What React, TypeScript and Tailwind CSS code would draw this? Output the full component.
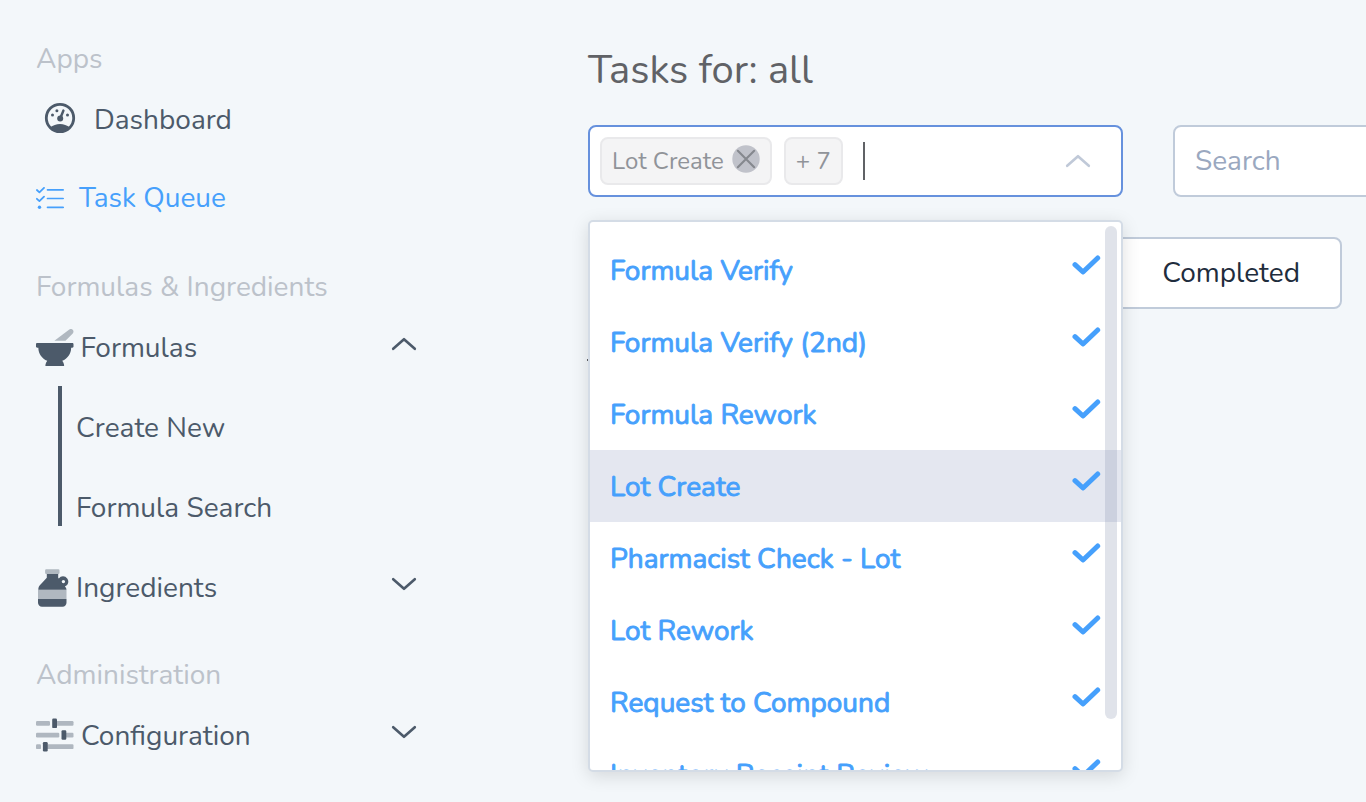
import React from "react";

const FONT = "font-['Nunito','Lato',sans-serif]";

function Chevron({ up, className }: { up?: boolean; className?: string }) {
  return (
    <svg viewBox="0 0 26 14" className={"h-[14px] w-[26px] shrink-0 " + (className ?? "")} fill="none" stroke="currentColor" strokeWidth="2.6" strokeLinecap="round" strokeLinejoin="round">
      <path d={up ? "M2.2 11.8 13 2.2 23.8 11.8" : "M2.2 2.2 13 11.8 23.8 2.2"} />
    </svg>
  );
}

function GaugeIcon() {
  return (
    <svg viewBox="0 0 32 32" className="mb-[2px] h-8 w-8 shrink-0">
      <circle cx="16" cy="16" r="13.7" fill="none" stroke="currentColor" strokeWidth="2.8" />
      <path d="M6.2 25.2C9 23.5 12.3 22.1 16 22.1s7 1.4 9.8 3.1A14 14 0 0 1 6.2 25.2Z" fill="currentColor" />
      <path d="M16.6 15.5 19.4 8.6" stroke="currentColor" strokeWidth="2.5" strokeLinecap="round" />
      <circle cx="16.2" cy="16.4" r="3" fill="currentColor" />
      <circle cx="8.5" cy="13" r="1.5" fill="currentColor" />
      <circle cx="12.9" cy="8.8" r="1.5" fill="currentColor" />
      <circle cx="23.5" cy="13" r="1.5" fill="currentColor" />
    </svg>
  );
}

function TasksIcon() {
  return (
    <svg viewBox="0 0 28 22" className="h-[22px] w-7 shrink-0" fill="none" stroke="currentColor" strokeWidth="1.8" strokeLinecap="round" strokeLinejoin="round">
      <path d="M11.5 2.8H27.2M11.5 11.5H27.2M11.5 20.3H27.2" strokeWidth="1.7" />
      <path d="M.9 3 3.4 5.3 8 .9M.9 11.8 3.4 14.1 8 9.7" />
      <circle cx="3.5" cy="20.3" r="1.7" fill="currentColor" stroke="none" />
    </svg>
  );
}

function MortarIcon() {
  return (
    <svg viewBox="0 0 512 512" className="mt-[2px] size-[37.5px] shrink-0" fill="currentColor">
      <path opacity=".4" d="M501.54 60.91c17.22-17.22 12.51-46.25-9.27-57.14a35.696 35.696 0 0 0-37.37 3.37L251.09 160h151.37l99.08-99.09z" />
      <path d="M496 192H16c-8.84 0-16 7.16-16 16v32c0 8.84 7.16 16 16 16h16c0 80.98 50.2 150.11 121.13 178.32-12.76 16.87-21.72 36.8-24.95 58.69-1.46 9.92 6.04 18.98 16.07 18.98h223.5c10.03 0 17.53-9.06 16.07-18.98-3.22-21.89-12.18-41.82-24.95-58.69C429.8 406.11 480 336.98 480 256h16c8.84 0 16-7.16 16-16v-32c0-8.84-7.16-16-16-16z" />
    </svg>
  );
}

function JugIcon() {
  return (
    <svg viewBox="0 0 34 38" className="h-[38px] w-[34px] shrink-0" fill="currentColor">
      <path opacity=".4" d="M10.3.2H22.3Q23.5.2 23.5 1.4V3.8Q23.5 5 22.3 5H10.3Q9.1 5 9.1 3.8V1.4Q9.1.2 10.3.2ZM2 20.7H30.5V30H2Z" />
      <path fillRule="evenodd" d="M10.8 5H22.2V8.8L22.8 9.4A5.3 5.3 0 1 1 28.9 17.6Q30.5 19.2 30.5 20.7H2.3C2.3 18 3.2 17 5 15L10.8 8.8ZM27.4 10.9A1.7 1.7 0 1 0 27.4 14.3 1.7 1.7 0 1 0 27.4 10.9Z" />
      <path d="M2 30H30.5V33.5A4 4 0 0 1 26.5 37.7H6A4 4 0 0 1 2 33.5Z" />
    </svg>
  );
}

function SlidersIcon() {
  return (
    <svg viewBox="0 0 38 34" className="h-[34px] w-[38px] shrink-0" fill="currentColor">
      <g opacity=".4">
        <rect x="0" y="3" width="14" height="4.8" rx="1.2" />
        <rect x="19" y="3" width="18.5" height="4.8" rx="1.2" />
        <rect x="0" y="14.7" width="23.3" height="4.8" rx="1.2" />
        <rect x="29" y="14.7" width="8.5" height="4.8" rx="1.2" />
        <rect x="0" y="26.3" width="5" height="4.8" rx="1.2" />
        <rect x="10" y="26.3" width="27.5" height="4.8" rx="1.2" />
      </g>
      <rect x="16.2" y=".6" width="4.8" height="9.5" rx="1.2" />
      <rect x="25.5" y="12.3" width="4.8" height="9.5" rx="1.2" />
      <rect x="6.9" y="24" width="4.8" height="9.5" rx="1.2" />
    </svg>
  );
}

function SectionLabel({ children, className }: { children: React.ReactNode; className: string }) {
  return <div className={"flex h-10 items-center text-[#bcc2ca] " + className}>{children}</div>;
}

function Sidebar() {
  return (
    <nav className="flex w-[588px] shrink-0 flex-col pt-[39px] pl-9 text-[28px] leading-10 text-[#4c5a6a]">
      <SectionLabel className="">Apps</SectionLabel>
      <a className="flex h-20 items-center gap-[16px] pl-2"><GaugeIcon /><span className="pt-[2px] pl-[2px]">Dashboard</span></a>
      <a className="flex h-[78px] items-center gap-[15px] text-[#46a0fc]"><TasksIcon /><span>Task Queue</span></a>
      <SectionLabel className="mt-[30px]">Formulas &amp; Ingredients</SectionLabel>
      <div className="flex h-[79px] w-[381px] items-center">
        <MortarIcon />
        <span className="flex-1 pt-[2px] pl-[7px]">Formulas</span>
        <Chevron up className="mb-[5px]" />
      </div>
      <div className="ml-[22px] h-[140px] border-l-4 border-[#4c5a6a] pl-[14px]">
        <div className="flex h-[84px] items-center">Create New</div>
        <div className="flex h-[76px] items-center">Formula Search</div>
      </div>
      <div className="mt-[22px] flex h-20 w-[381px] items-center">
        <JugIcon />
        <span className="flex-1 pl-[6px]">Ingredients</span>
        <Chevron className="mb-[8px]" />
      </div>
      <SectionLabel className="mt-[27px]">Administration</SectionLabel>
      <div className="flex h-20 w-[381px] items-center">
        <SlidersIcon />
        <span className="flex-1 pt-[2px] pl-[7px]">Configuration</span>
        <Chevron className="mb-[7px]" />
      </div>
    </nav>
  );
}

const OPTIONS = ["Formula Verify", "Formula Verify (2nd)", "Formula Rework", "Lot Create", "Pharmacist Check - Lot", "Lot Rework", "Request to Compound", "Inventory Receipt Review"];

function Dropdown() {
  return (
    <div className="absolute top-[93px] -left-[2px] z-10 h-[552px] w-[535px] overflow-hidden rounded-[5px] border-2 border-[#d4dce6] bg-white pt-3 shadow-[0_4px_18px_rgba(0,0,0,0.13)]">
      {OPTIONS.map((o) => (
        <div key={o} className={"flex h-[72px] items-center justify-between pr-5 pl-5 text-[28px] text-[#46a0fc] " + (o === "Lot Create" ? "bg-[#e4e7f0]" : "")}>
          <span className="pt-[3px] [-webkit-text-stroke:0.9px_#46a0fc]">{o}</span>
          <svg viewBox="0 0 30 22" className="mb-[10px] h-[22px] w-[30px]" fill="none" stroke="currentColor" strokeWidth="5" strokeLinecap="round" strokeLinejoin="round">
            <path d="M4 10.6 12 18 26.7 4" />
          </svg>
        </div>
      ))}
      <div className="absolute top-1 right-1 h-[493px] w-3 rounded-full bg-[rgba(144,153,178,0.28)]" />
    </div>
  );
}

function TaskSelect() {
  return (
    <div className="relative flex h-[72px] w-[535px] shrink-0 items-center rounded-lg border-2 border-[#6691dd] bg-white pl-[10px] text-2xl text-[#909399]">
      <span className="flex h-12 items-center rounded-lg border-2 border-[#e9e9eb] bg-[#f4f4f5] pr-[10px] pl-[10px]">
        Lot Create
        <svg viewBox="0 0 28 28" className="mb-[4px] ml-[8px] h-7 w-7">
          <circle cx="14" cy="14" r="13.7" fill="#c0c2ca" />
          <path d="M5.8 5.8 22.2 22.2M22.2 5.8 5.8 22.2" stroke="#85888e" strokeWidth="2.1" strokeLinecap="round" />
        </svg>
      </span>
      <span className="ml-3 flex h-12 w-[59px] items-center justify-center rounded-lg border-2 border-[#e9e9eb] bg-[#f4f4f5]">+ 7</span>
      <span className="ml-5 h-[38px] w-[2px] bg-[#606266]" />
      <Chevron up className="mr-[30px] ml-auto text-[#c0c9d8]" />
      <Dropdown />
    </div>
  );
}

export default function App() {
  return (
    <div className={"flex h-[802px] w-[1366px] overflow-hidden bg-[#f3f7fa] " + FONT}>
      <Sidebar />
      <main className="flex min-w-0 flex-1 flex-col pt-10">
        <h1 className="h-[85px] text-[40px] leading-[60px] text-[#606266]">Tasks for: all</h1>
        <div className="flex gap-[50px]">
          <TaskSelect />
          <div className="flex h-[72px] w-[400px] shrink-0 items-center rounded-lg border-2 border-[#c0cbda] bg-white pl-5 text-[28px] text-[#9aa8c0]">Search</div>
        </div>
        <div className="mt-10 flex h-[72px] w-[754px] items-center justify-end rounded-lg border-2 border-[#c0cbda] bg-white pr-10 text-[28px] text-[#1f2d3d]">Completed</div>
        <div className="mt-[50px] -ml-px h-[2px] w-px bg-[#606266]" />
      </main>
    </div>
  );
}
